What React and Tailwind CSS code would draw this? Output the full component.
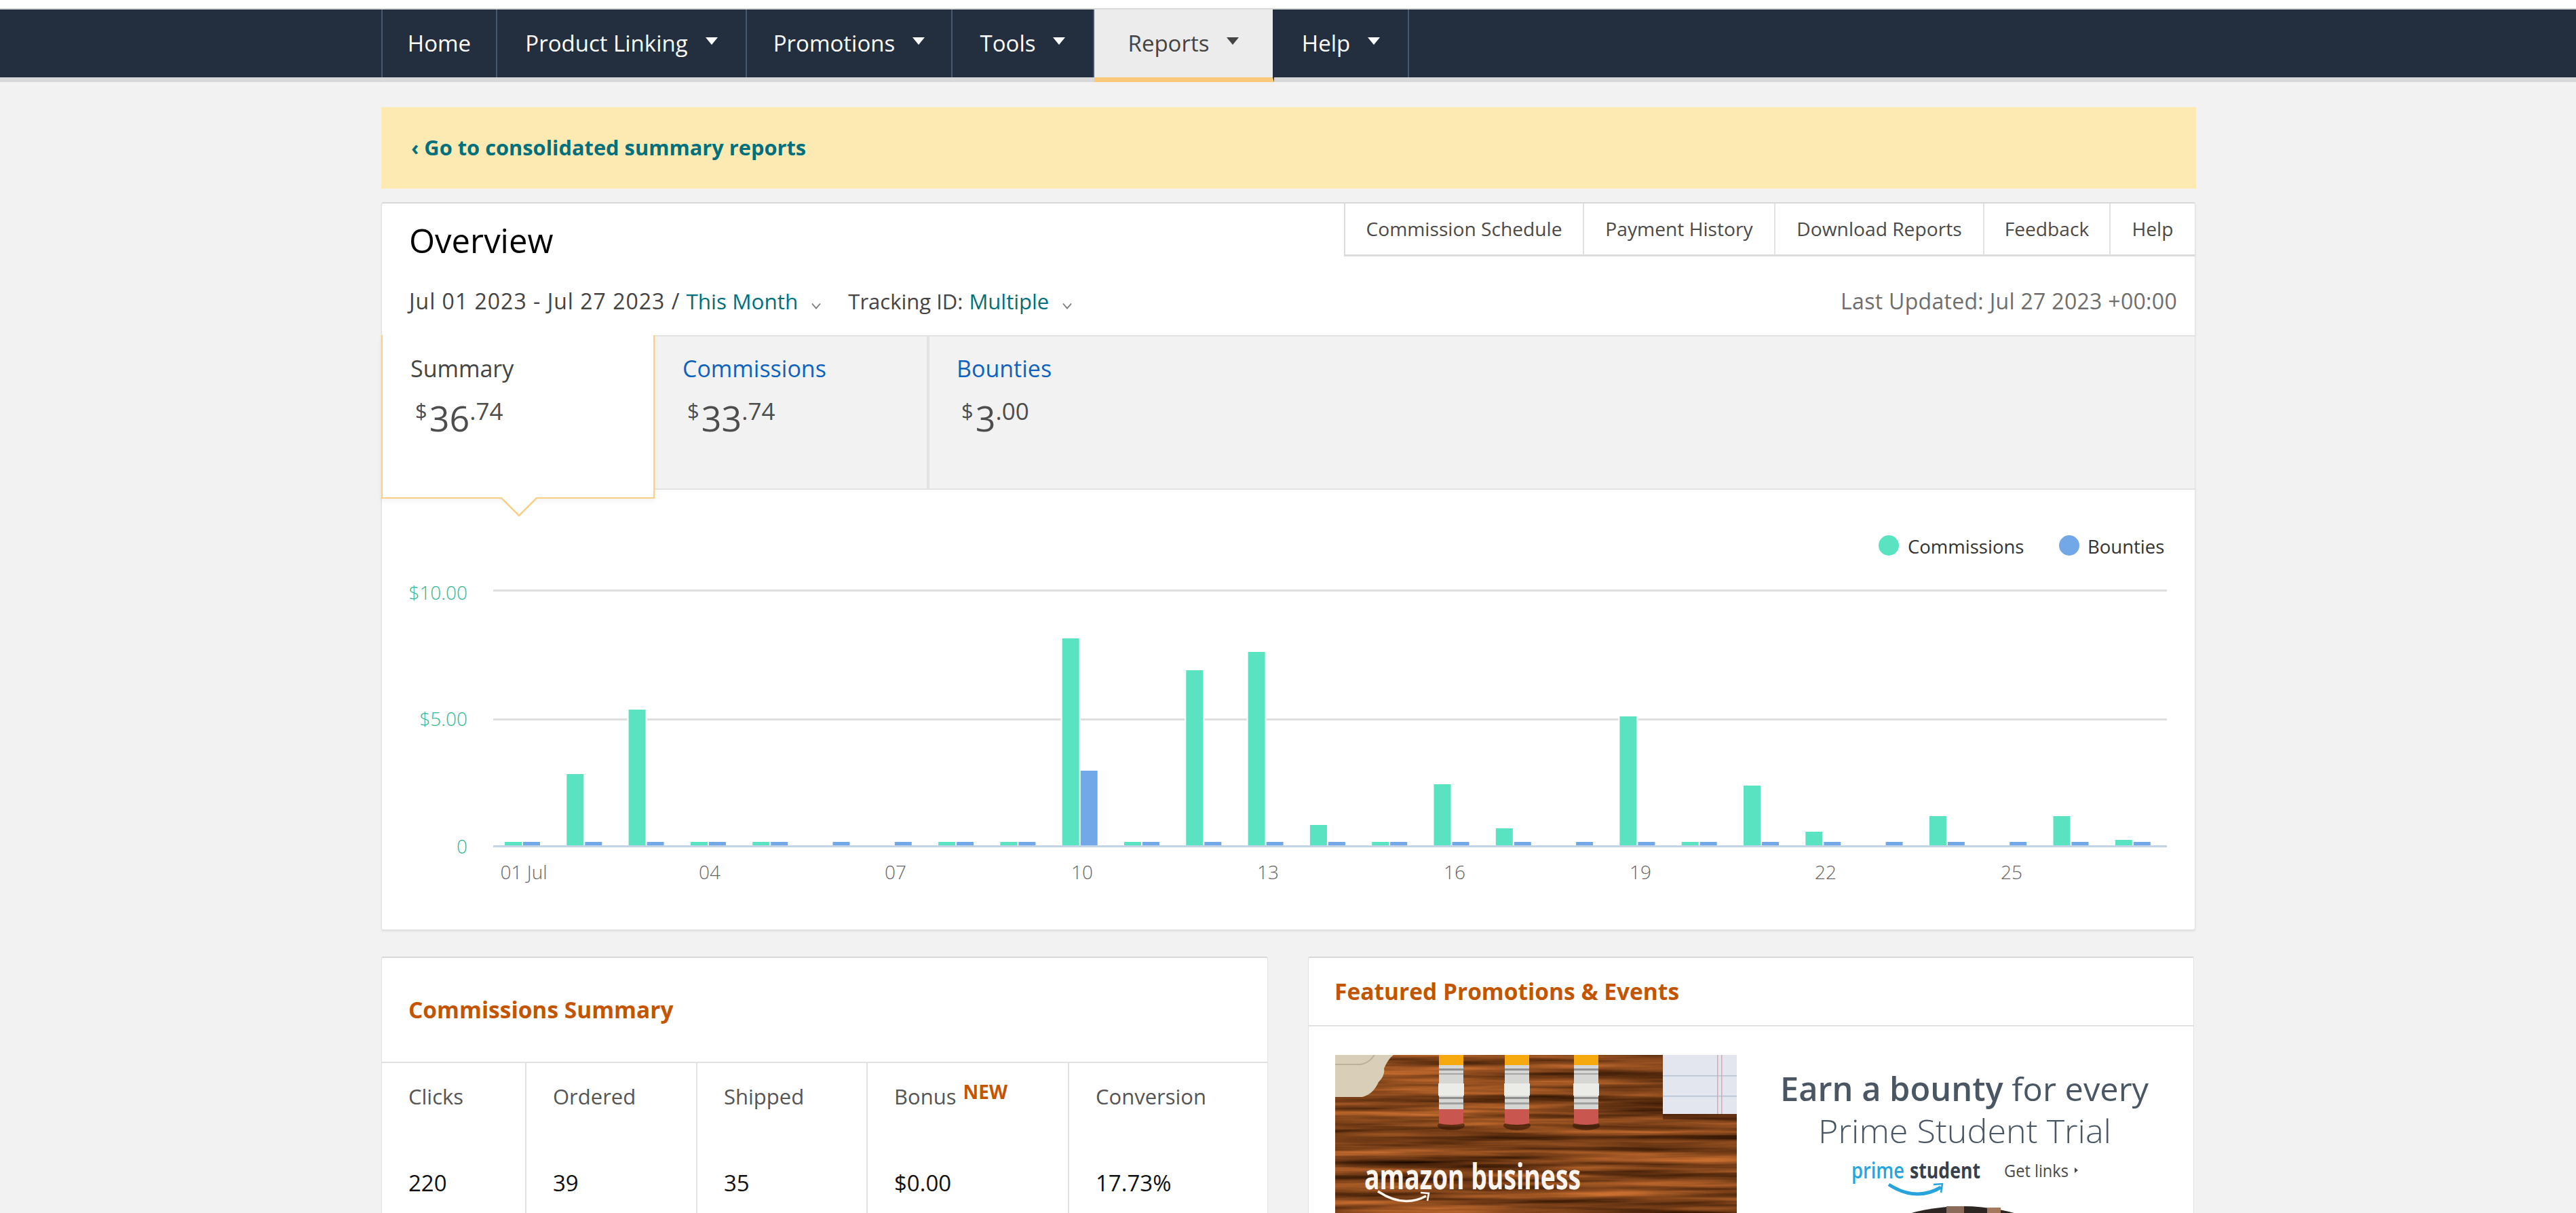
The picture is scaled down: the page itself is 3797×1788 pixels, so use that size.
import React from 'react';

const NAV = [
    { label: 'Home', w: 'w-[169px]', caret: false },
    { label: 'Product Linking', w: 'w-[368px]', caret: true },
    { label: 'Promotions', w: 'w-[303px]', caret: true },
    { label: 'Tools', w: 'w-[209px]', caret: true },
    { label: 'Reports', w: 'w-[265px]', caret: true, active: true },
    { label: 'Help', w: 'w-[199px]', caret: true },
];

const TOOL_TABS = [
    { label: 'Commission Schedule', w: 'w-[352px]' },
    { label: 'Payment History', w: 'w-[282px]' },
    { label: 'Download Reports', w: 'w-[308px]' },
    { label: 'Feedback', w: 'w-[186px]' },
    { label: 'Help', w: 'w-[124px]' },
];

// commission bar height per day, null when the day has no bar
const COMMISSIONS = [5, 105, 200, 5, 5, null, null, 5, 5, 305, 5, 258, 285, 30, 5, 90, 25, null, 190, 5, 88, 20, null, 43, null, 43, 8];
const BOUNTIES = COMMISSIONS.map((_, i) => (i === 9 ? 110 : 5));
const TICKS = [
    { label: '01 Jul', x: 772 },
    { label: '04', x: 1046 },
    { label: '07', x: 1320 },
    { label: '10', x: 1595 },
    { label: '13', x: 1869 },
    { label: '16', x: 2144 },
    { label: '19', x: 2418 },
    { label: '22', x: 2691 },
    { label: '25', x: 2965 },
];

const STATS = [
    { label: 'Clicks', value: '220', w: 'w-[213px]' },
    { label: 'Ordered', value: '39', w: 'w-[252px]' },
    { label: 'Shipped', value: '35', w: 'w-[251px]' },
    { label: 'Bonus', value: '$0.00', w: 'w-[297px]', isNew: true },
    { label: 'Conversion', value: '17.73%', w: 'flex-1' },
];

const Chevron = () => (
    <svg className="ml-[20px] mt-[14px] h-[10px] w-[14px]" viewBox="0 0 14 10" fill="none">
        <path d="M1 1.5 L7 8.5 L13 1.5" stroke="#7a7a7a" strokeWidth="1.8" />
    </svg>
);

const Price = ({ whole, cents, className }) => (
    <div className={`flex items-start leading-none text-[#4d4d4d] ${className}`}>
        <span className="mt-[2px] text-[31px]">$</span>
        <span className="ml-[3px] mt-[2px] text-[52px]">{whole}</span>
        <span className="text-[35px]">.{cents}</span>
    </div>
);

const Chart = () => (
    <svg className="block h-[649px] w-[2672px]" viewBox="563 722 2672 649">
        <circle cx="2784" cy="804" r="15" fill="#5ae3c0" />
        <text x="2812" y="816" className="fill-[#333333] text-[27.5px]">Commissions</text>
        <circle cx="3050" cy="804" r="15" fill="#72a8e8" />
        <text x="3077" y="816" className="fill-[#333333] text-[27.5px]">Bounties</text>

        <rect x="727" y="869" width="2467" height="3" fill="#dedede" />
        <rect x="727" y="1059" width="2467" height="3" fill="#dedede" />
        {COMMISSIONS.map((h, i) => {
            const x = 744 + i * 91.3;
            return (
                <g key={i}>
                    {h > 187 && <rect x={x - 2} y="1059" width="29" height="3" fill="#ffffff" />}
                    {h !== null && <rect x={x} y={1246 - h} width="25" height={h} fill="#5ae3c0" />}
                    <rect x={x + 27} y={1246 - BOUNTIES[i]} width="25" height={BOUNTIES[i]} fill="#72a8e8" />
                </g>
            );
        })}
        <rect x="727" y="1246" width="2467" height="3" fill="#c5d3e6" />

        <text x="689" y="884" textAnchor="end" className="fill-[#2fb893] text-[28px] font-light">$10.00</text>
        <text x="689" y="1070" textAnchor="end" className="fill-[#2fb893] text-[28px] font-light">$5.00</text>
        <text x="689" y="1258" textAnchor="end" className="fill-[#2fb893] text-[28px] font-light">0</text>
        {TICKS.map((t) => (
            <text key={t.label} x={t.x} y="1296" textAnchor="middle" className="fill-[#666666] text-[28px] font-light">{t.label}</text>
        ))}
    </svg>
);

const Pencil = ({ x }) => (
    <g transform={`translate(${x} 0)`}>
        <ellipse cx="18" cy="104" rx="20" ry="7" fill="#2e1206" opacity="0.55" />
        <rect x="0" width="36" height="16" fill="#f5a90f" />
        <rect y="15" width="36" height="65" fill="#d6d6d4" />
        <rect y="20" width="36" height="3" fill="#8f8f8f" />
        <rect y="27" width="36" height="2" fill="#a5a5a3" />
        <rect x="-1" y="42" width="38" height="18" fill="#ebebe8" />
        <rect y="62" width="36" height="3" fill="#8f8f8f" />
        <rect y="70" width="36" height="3" fill="#a0a09e" />
        <path d="M0 80 H36 V101 Q18 105 0 101 Z" fill="#c9564f" />
    </g>
);

const BusinessAd = () => (
    <svg className="block h-[300px] w-[592px] shrink-0" viewBox="0 0 592 300">
        <defs>
            <filter id="wood" x="0" y="0" width="100%" height="100%" colorInterpolationFilters="sRGB">
                <feTurbulence type="fractalNoise" baseFrequency="0.003 0.085" numOctaves="4" seed="7" />
                <feColorMatrix type="matrix" values="0.95 0 0 0 0.02  0.56 0 0 0 -0.02  0.28 0 0 0 -0.04  0 0 0 0 1" />
            </filter>
        </defs>
        <rect width="592" height="300" fill="#7c3b14" />
        <rect width="592" height="300" filter="url(#wood)" />
        <path d="M0 0 H86 Q78 6 72 20 Q74 30 64 40 Q56 58 40 62 H0 Z" fill="#d9cfb8" />
        <path d="M0 14 H38 Q50 12 58 0" fill="none" stroke="#bcb198" strokeWidth="2" />
        <Pencil x={153} />
        <Pencil x={250} />
        <Pencil x={352} />
        <rect x="483" y="87" width="109" height="8" fill="#2e1206" opacity="0.45" />
        <rect x="483" width="109" height="87" fill="#e3e6ee" />
        <rect x="483" y="30" width="109" height="1.5" fill="#b4c0d4" />
        <rect x="483" y="60" width="109" height="1.5" fill="#b4c0d4" />
        <rect x="563" width="1.5" height="87" fill="#dba7aa" />
        <rect x="569" width="1.5" height="87" fill="#dba7aa" />
        <text x="43" y="198" textLength="319" lengthAdjust="spacingAndGlyphs" className="fill-[#fbf5ee] text-[52px] font-bold">amazon business</text>
        <path d="M63 201 Q100 226 134 208" fill="none" stroke="#fbf5ee" strokeWidth="3.5" />
        <path d="M126 203 L138 204 L136 215" fill="none" stroke="#fbf5ee" strokeWidth="2.5" />
    </svg>
);

const StudentAd = () => (
    <svg className="block h-[240px] w-[660px]" viewBox="2570 1555 660 240">
        <text x="2625" y="1623" textLength="543" lengthAdjust="spacingAndGlyphs" className="fill-[#4a5663] text-[48px]">
            <tspan className="font-semibold">Earn a bounty</tspan> for every
        </text>
        <text x="2681" y="1685" textLength="432" lengthAdjust="spacingAndGlyphs" className="fill-[#4a5663] text-[48px] font-light">Prime Student Trial</text>
        <text x="2730" y="1737" textLength="78" lengthAdjust="spacingAndGlyphs" className="fill-[#27a4dd] text-[33px] font-semibold">prime</text>
        <text x="2816" y="1737" textLength="104" lengthAdjust="spacingAndGlyphs" className="fill-[#37414d] text-[33px] font-bold">student</text>
        <text x="2955" y="1735" textLength="95" lengthAdjust="spacingAndGlyphs" className="fill-[#4a4a4a] text-[26px] font-medium">Get links</text>
        <path d="M3059 1721 L3064 1725 L3059 1729 Z" fill="#4a4a4a" />
        <path d="M2785 1746 Q2825 1772 2862 1750" fill="none" stroke="#27a4dd" strokeWidth="5" />
        <path d="M2851 1746 L2864 1745 L2862 1758" fill="none" stroke="#27a4dd" strokeWidth="2.5" />
        <circle cx="2894" cy="2068" r="290" fill="#2d2622" />
        <rect x="2870" y="1778" width="26" height="12" fill="#8a6a58" />
        <rect x="2930" y="1780" width="20" height="10" fill="#a57a5c" />
    </svg>
);

export default function App() {
    return (
        <div className="h-[1788px] overflow-hidden bg-[#f2f2f2] font-['Open_Sans',sans-serif] text-[#333333]">
            {/* Top nav */}
            <div className="h-[12px] bg-white" />
            <div className="h-[2px] bg-[#d8d8d8]" />
            <div className="h-[100px] bg-[#232f3e]">
                <div className="ml-[562px] flex w-[2675px] items-start border-l-2 border-[#46586f]">
                    {NAV.map((item) => (
                        <div
                            key={item.label}
                            className={`flex items-center justify-center border-r-2 text-[33px] ${item.w} ${
                                item.active
                                    ? 'h-[107px] border-[#232f3e] border-b-[7px] border-b-[#f9c879] bg-[#ececec] text-[#444444]'
                                    : 'h-[100px] border-[#46586f] text-white'
                            }`}
                        >
                            <span>{item.label}</span>
                            {item.caret && (
                                <span className="mb-[8px] ml-[26px] h-0 w-0 border-x-[9px] border-t-[11px] border-x-transparent border-t-current" />
                            )}
                        </div>
                    ))}
                </div>
            </div>
            <div className="h-[7px] bg-[#d8d8d8]" />

            <div className="ml-[562px] w-[2675px] pt-[37px]">
                {/* Banner */}
                <div className="flex h-[120px] items-center bg-[#fdeab3] pb-[2px] pl-[44px] text-[30.8px] font-bold text-[#00707c]">
                    ‹ Go to consolidated summary reports
                </div>

                {/* Overview card */}
                <div className="mt-[20px] h-[1073px] w-[2674px] rounded-[3px] border border-t-2 border-[#e2e2e2] border-t-[#d8d8d8] bg-white shadow-[0_2px_3px_rgba(0,0,0,0.08)]">
                    <div className="flex items-start justify-between">
                        <div className="pl-[40px] pt-[22px] text-[49px] leading-[64px] text-black">Overview</div>
                        <div className="flex h-[78px] border-b-[3px] border-l-2 border-[#dcdcdc]">
                            {TOOL_TABS.map((t, i) => (
                                <div
                                    key={t.label}
                                    className={`flex items-center justify-center text-[28.2px] text-[#4a4a4a] ${t.w} ${i < 4 ? 'border-r-2 border-[#e2e2e2]' : ''}`}
                                >
                                    {t.label}
                                </div>
                            ))}
                        </div>
                    </div>

                    <div className="flex items-center justify-between pl-[40px] pr-[26px] pt-[36px] text-[31px] leading-[44px]">
                        <div className="flex items-center">
                            <span className="text-[32px] tracking-[1px] text-[#444444]">Jul 01 2023 - Jul 27 2023 /</span>
                            <span className="ml-[9px] text-[31.5px] text-[#00707c]">This Month</span>
                            <Chevron />
                            <span className="ml-[40px] text-[#444444]">Tracking ID:</span>
                            <span className="ml-[9px] text-[#00707c]">Multiple</span>
                            <Chevron />
                        </div>
                        <span className="text-[32px] tracking-[0.3px] text-[#6e6e6e]">Last Updated: Jul 27 2023 +00:00</span>
                    </div>

                    {/* Summary tabs */}
                    <div className="mt-[28px] flex h-[228px] items-start border-y-2 border-[#e2e2e2] bg-[#f2f2f2]">
                        <div className="relative -ml-px -mt-[2px] h-[241px] w-[403px] border-x-2 border-b-2 border-[#fbcf85] bg-white pl-[41px] pt-[26px] shadow-[0_4px_8px_rgba(0,0,0,0.05)]">
                            <div className="text-[34px] leading-[46px] text-[#444444]">Summary</div>
                            <Price whole="36" cents="74" className="ml-[7px] mt-[22px]" />
                            <svg className="absolute -bottom-[30px] left-[173px] h-[30px] w-[56px]" viewBox="0 0 56 30">
                                <path d="M1 0 L28 27 L55 0" fill="#ffffff" stroke="#fbcf85" strokeWidth="2.5" />
                            </svg>
                        </div>
                        <div className="h-full w-[405px] border-r-[4px] border-[#e2e2e2] pl-[41px] pt-[24px]">
                            <div className="text-[34px] leading-[46px] text-[#0f63bd]">Commissions</div>
                            <Price whole="33" cents="74" className="ml-[7px] mt-[22px]" />
                        </div>
                        <div className="h-full flex-1 pl-[40px] pt-[24px]">
                            <div className="text-[34px] leading-[46px] text-[#0f63bd]">Bounties</div>
                            <Price whole="3" cents="00" className="ml-[7px] mt-[22px]" />
                        </div>
                    </div>

                    <Chart />
                </div>

                {/* Bottom cards */}
                <div className="mt-[39px] flex items-start">
                    <div className="h-[600px] w-[1307px] rounded-[3px] border border-t-2 border-[#e2e2e2] border-t-[#d8d8d8] bg-white">
                        <div className="flex h-[155px] items-center border-b-2 border-[#e2e2e2] pl-[39px] text-[33.5px] font-bold text-[#c45500]">
                            Commissions Summary
                        </div>
                        <div className="flex h-full">
                            {STATS.map((s, i) => (
                                <div key={s.label} className={`pl-[39px] pt-[26px] ${s.w} ${i < 4 ? 'border-r-2 border-[#e2e2e2]' : ''}`}>
                                    <div className="flex items-start text-[31px] leading-[46px] text-[#555555]">
                                        {s.label}
                                        {s.isNew && <span className="-mt-[4px] ml-[10px] text-[28px] font-bold leading-[40px] text-[#c45500]">NEW</span>}
                                    </div>
                                    <div className="mt-[82px] text-[33px] leading-[46px] text-[#111111]">{s.value}</div>
                                </div>
                            ))}
                        </div>
                    </div>

                    <div className="ml-[59px] h-[600px] w-[1306px] rounded-[3px] border border-t-2 border-[#e2e2e2] border-t-[#d8d8d8] bg-white">
                        <div className="flex h-[101px] items-center border-b-2 border-[#e2e2e2] pl-[38px] text-[33.5px] font-bold text-[#c45500]">
                            Featured Promotions &amp; Events
                        </div>
                        <div className="flex pl-[39px] pt-[42px]">
                            <BusinessAd />
                            <div className="-mt-[42px] ml-[9px] pt-[42px]">
                                <StudentAd />
                            </div>
                        </div>
                    </div>
                </div>
            </div>
        </div>
    );
}
